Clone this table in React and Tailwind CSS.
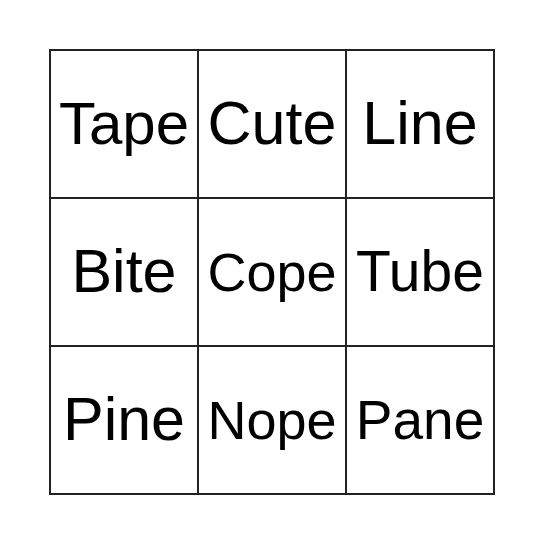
const cells = [
  { word: 'Tape', size: 'text-[60px]' },
  { word: 'Cute', size: 'text-[61px]' },
  { word: 'Line', size: 'text-[61px]' },
  { word: 'Bite', size: 'text-[61px]' },
  { word: 'Cope', size: 'text-[54px]' },
  { word: 'Tube', size: 'text-[57px]' },
  { word: 'Pine', size: 'text-[61px]' },
  { word: 'Nope', size: 'text-[54px]' },
  { word: 'Pane', size: 'text-[55px]' },
]

export default function App() {
  return (
    <div className="flex h-[544px] w-[544px] items-start bg-white pl-[49px] pt-[49px] font-['Liberation_Sans',Arial,sans-serif] text-black">
      <div className="grid grid-cols-[repeat(3,148px)] border-l-2 border-t-2 border-[#222]">
        {cells.map((c) => (
          <div
            key={c.word}
            className={`flex h-[148px] w-[148px] items-center justify-center border-b-2 border-r-2 border-[#222] ${c.size}`}
          >
            {c.word}
          </div>
        ))}
      </div>
    </div>
  )
}
